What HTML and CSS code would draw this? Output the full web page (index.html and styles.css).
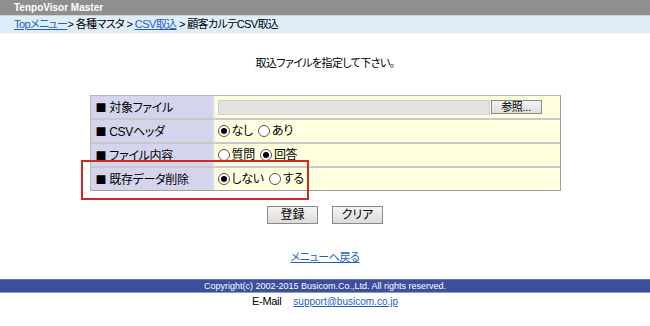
FILE: index.html
```html
<!DOCTYPE html>
<html lang="ja">
<head>
    <meta charset="UTF-8">
    <title>顧客カルテCSV取込</title>
    <link rel="stylesheet" href="styles.css">
</head>
<body>
    <div class="header">TenpoVisor Master</div>
    <div class="breadcrumb">
        <a href="#">Topメニュー</a>&gt; 各種マスタ &gt; <a href="#">CSV取込</a> &gt; 顧客カルテCSV取込
    </div>

    <div class="main">
        <p class="title">取込ファイルを指定して下さい。</p>

        <div class="form-wrap">
            <table class="form">
                <tr>
                    <th><span class="mark">■</span> 対象ファイル</th>
                    <td>
                        <div class="file-row">
                            <span class="file-box"></span>
                            <span class="btn btn-browse">参照...</span>
                        </div>
                    </td>
                </tr>
                <tr>
                    <th><span class="mark">■</span> CSVヘッダ</th>
                    <td>
                        <div class="radios">
                            <label class="opt"><span class="radio on"></span>なし</label>
                            <label class="opt"><span class="radio"></span>あり</label>
                        </div>
                    </td>
                </tr>
                <tr>
                    <th><span class="mark">■</span> ファイル内容</th>
                    <td>
                        <div class="radios">
                            <label class="opt"><span class="radio"></span>質問</label>
                            <label class="opt"><span class="radio on"></span>回答</label>
                        </div>
                    </td>
                </tr>
                <tr>
                    <th><span class="mark">■</span> 既存データ削除</th>
                    <td>
                        <div class="radios">
                            <label class="opt"><span class="radio on"></span>しない</label>
                            <label class="opt"><span class="radio"></span>する</label>
                        </div>
                    </td>
                </tr>
            </table>
            <!-- 注目枠 -->
            <div class="highlight"></div>
        </div>

        <div class="buttons">
            <span class="btn">登録</span>
            <span class="btn">クリア</span>
        </div>

        <p class="back"><a href="#">メニューへ戻る</a></p>
    </div>

    <div class="footer">Copyright(c) 2002-2015 Busicom.Co.,Ltd. All rights reserved.</div>
    <div class="mail">E-Mail<a href="#">support@busicom.co.jp</a></div>
</body>
</html>
```

FILE: styles.css
```css
body {
    margin: 0;
    font-family: "Liberation Sans", "Noto Sans CJK JP", sans-serif;
    font-size: 12px;
    font-feature-settings: "palt";
    color: #000;
    background: #fff;
}
a {
    color: #1f5fc0;
}
.header {
    height: 15px;
    line-height: 15px;
    padding-left: 14px;
    background: #8f8f8f;
    border-bottom: 1px solid #c9d3dc;
    color: #fff;
    font-size: 10px;
    font-weight: bold;
}
.breadcrumb {
    height: 17px;
    line-height: 17px;
    padding-left: 14px;
    background: #deedf8;
    border-bottom: 1px solid #f0f6fb;
    font-size: 11px;
    letter-spacing: -0.6px;
}
.main {
    text-align: center;
}
.title {
    margin: 19px 0 0;
    height: 20px;
    line-height: 20px;
    font-size: 11px;
    letter-spacing: -0.6px;
}
.form-wrap {
    position: relative;
    width: 471px;
    margin: 22px auto 0;
}
.form {
    width: 100%;
    border-collapse: separate;
    border-spacing: 0;
    border: 1px solid #b8b8b8;
    border-right-color: #a0a0a0;
    border-bottom-color: #a0a0a0;
    background: #fff;
    text-align: left;
    letter-spacing: -0.3px;
}
.form th,
.form td {
    height: 22px;
    line-height: 16px;
    padding: 0;
    border-bottom: 2px solid #c8c8c8;
}
.form tr:last-child th,
.form tr:last-child td {
    border-bottom: none;
}
.form th {
    width: 117px;
    padding-left: 5px;
    background: #d4d4ec;
    border-right: 2px solid #e8e8e8;
    font-weight: normal;
}
.mark {
    font-family: "Noto Sans CJK JP", sans-serif;
    font-size: 11px;
}
.form td {
    padding-left: 3px;
    background: #ffffe0;
}
.file-row {
    display: flex;
    align-items: center;
}
.file-box {
    width: 270px;
    height: 13px;
    background: #e2e2e2;
    border: 1px solid #d0d0d0;
}
.radios {
    display: flex;
    align-items: center;
    gap: 5px;
}
.opt {
    display: flex;
    align-items: center;
}
.radio {
    box-sizing: border-box;
    width: 12px;
    height: 12px;
    margin-right: 2px;
    border: 1px solid #555;
    border-radius: 50%;
    background: #fff;
    display: flex;
    align-items: center;
    justify-content: center;
}
.radio.on::after {
    content: "";
    width: 6px;
    height: 6px;
    border-radius: 50%;
    background: #000;
}
.highlight {
    position: absolute;
    left: -9px;
    top: 65px;
    width: 224px;
    height: 36px;
    border: 2px solid #d02828;
}
.btn {
    box-sizing: border-box;
    display: inline-block;
    width: 51px;
    height: 18px;
    line-height: 16px;
    border: 1px solid #8a8a8a;
    background: linear-gradient(#f4f4f4, #dcdcdc);
    text-align: center;
    font-size: 12px;
}
.btn-browse {
    height: 14px;
    line-height: 12px;
    margin-left: 1px;
    font-size: 11px;
}
.buttons {
    display: flex;
    justify-content: center;
    gap: 14px;
    margin-top: 15px;
}
.back {
    margin: 25px 0 0;
    height: 16px;
    line-height: 16px;
    font-size: 11px;
    letter-spacing: -0.4px;
}
.footer {
    margin-top: 14px;
    height: 12px;
    line-height: 12px;
    background: #3b4f9c;
    border-top: 1px solid #6272b0;
    border-bottom: 1px solid #8d9bcf;
    color: #fff;
    font-size: 9px;
    text-align: center;
}
.mail {
    margin-top: 2px;
    text-align: center;
    font-size: 11px;
    letter-spacing: -0.3px;
}
.mail a {
    margin-left: 12px;
    font-size: 10px;
    letter-spacing: 0;
}
```
